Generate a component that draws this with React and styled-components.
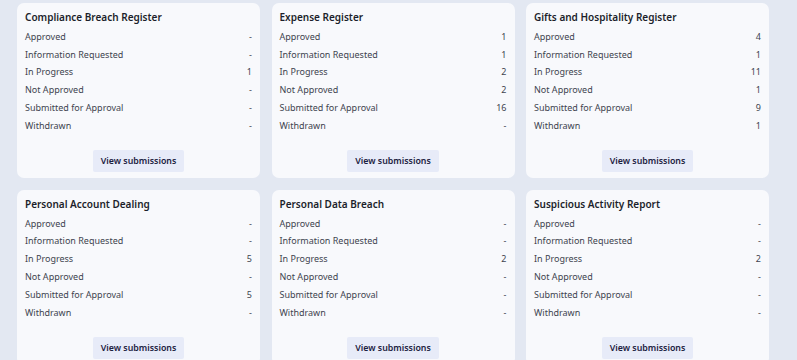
import styled, { createGlobalStyle } from "styled-components";

const GlobalStyle = createGlobalStyle`
  html, body {
    margin: 0;
    padding: 0;
    background: #e3e8f2;
    font-family: "Noto Sans", "Open Sans", sans-serif;
  }
`;

const registers = [
  {
    title: "Compliance Breach Register",
    counts: ["-", "-", "1", "-", "-", "-"],
  },
  {
    title: "Expense Register",
    counts: ["1", "1", "2", "2", "16", "-"],
  },
  {
    title: "Gifts and Hospitality Register",
    counts: ["4", "1", "11", "1", "9", "1"],
  },
  {
    title: "Personal Account Dealing",
    counts: ["-", "-", "5", "-", "5", "-"],
  },
  {
    title: "Personal Data Breach",
    counts: ["-", "-", "2", "-", "-", "-"],
  },
  {
    title: "Suspicious Activity Report",
    counts: ["-", "-", "2", "-", "-", "-"],
  },
];

const statuses = [
  "Approved",
  "Information Requested",
  "In Progress",
  "Not Approved",
  "Submitted for Approval",
  "Withdrawn",
];

const Page = styled.div`
  width: 797px;
  height: 360px;
  overflow: hidden;
  box-sizing: border-box;
  padding: 3px 28px 0 17px;
`;

const Grid = styled.div`
  display: grid;
  grid-template-columns: repeat(3, 1fr);
  column-gap: 11.5px;
  row-gap: 12px;
`;

const Card = styled.div`
  background: #f8f9fc;
  border-radius: 7px;
  padding: 6px 8px 6px;
  display: flex;
  flex-direction: column;
`;

const Title = styled.div`
  font-size: 10px;
  font-weight: 600;
  line-height: 16px;
  color: #1c1f2b;
  margin-bottom: 2.5px;
`;

const Row = styled.div`
  display: flex;
  justify-content: space-between;
  align-items: center;
  height: 17.8px;
  font-size: 9px;
  color: #40444f;
`;

const Footer = styled.div`
  display: flex;
  justify-content: center;
  margin-top: 15.5px;
`;

const ViewButton = styled.button`
  height: 22px;
  padding: 0 8px;
  border: none;
  border-radius: 2px;
  background: #e7ebf8;
  color: #1b2140;
  font-family: inherit;
  font-size: 8.8px;
  font-weight: 600;
  cursor: pointer;
`;

function RegisterCard({ title, counts }) {
  return (
    <Card>
      <Title>{title}</Title>
      {statuses.map((s, i) => (
        <Row key={s}>
          <span>{s}</span>
          <span>{counts[i]}</span>
        </Row>
      ))}
      <Footer>
        <ViewButton>View submissions</ViewButton>
      </Footer>
    </Card>
  );
}

export default function App() {
  return (
    <Page>
      <GlobalStyle />
      <Grid>
        {registers.map((r) => (
          <RegisterCard key={r.title} {...r} />
        ))}
      </Grid>
    </Page>
  );
}
